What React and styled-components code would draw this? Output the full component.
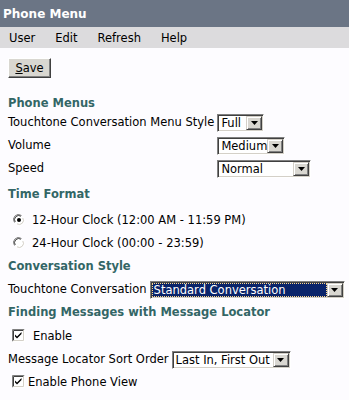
import React from 'react'
import styled, { createGlobalStyle } from 'styled-components'

const GlobalStyle = createGlobalStyle`
  body {
    margin: 0;
    background: #fdfcff;
    font-family: "DejaVu Sans", Verdana, sans-serif;
    font-size: 11.5px;
    color: #000;
  }
`

const TitleBar = styled.div`
  height: 27px;
  background: #6b7585;
  color: #fff;
  font-weight: bold;
  font-size: 12px;
  display: flex;
  align-items: center;
  padding-left: 3px;
`

const MenuBar = styled.div`
  height: 21px;
  background: #dcdbdd;
  display: flex;
  align-items: center;
  gap: 20px;
  padding-left: 9px;
`

const MenuItem = styled.span`
  cursor: default;
`

const Content = styled.div`
  padding: 0 8px;
`

const Toolbar = styled.div`
  padding-top: 10px;
  display: flex;
`

const Button = styled.div`
  width: 43px;
  height: 20px;
  box-sizing: border-box;
  background: #d9d7d1;
  border: 1px solid;
  border-color: #fff #404040 #404040 #fff;
  box-shadow: inset -1px -1px #808080;
  display: flex;
  align-items: center;
  justify-content: center;
  u {
    text-decoration: underline;
  }
`

const SectionTitle = styled.div`
  color: #336666;
  font-weight: bold;
  line-height: 14px;
  padding-top: ${p => p.$top}px;
  padding-bottom: ${p => p.$bottom}px;
`

const FormGrid = styled.div`
  display: grid;
  grid-template-columns: auto auto;
  justify-content: start;
  column-gap: 3px;
  grid-auto-rows: 23px;
  align-items: center;
`

const Row = styled.div`
  height: 23px;
  display: flex;
  align-items: center;
  gap: ${p => p.$gap || 4}px;
  padding-left: ${p => p.$indent || 0}px;
`

const Label = styled.span`
  white-space: nowrap;
`

const SelectFrame = styled.div`
  width: ${p => p.$width}px;
  height: 18px;
  flex-shrink: 0;
  box-sizing: border-box;
  margin-top: 3px;
  display: flex;
  align-items: center;
  background: #fff;
  border: 1px solid;
  border-color: #808080 #fff #fff #808080;
  box-shadow: inset 1px 1px #404040, inset -1px -1px #d4d0c8;
  padding: 1px;
`

const SelectValue = styled.div`
  flex: 1;
  height: 14px;
  line-height: 14px;
  padding-left: 2px;
  white-space: nowrap;
  overflow: hidden;
  box-sizing: border-box;
  background: ${p => (p.$selected ? '#0a246a' : 'transparent')};
  color: ${p => (p.$selected ? '#fff' : '#000')};
  outline: ${p => (p.$selected ? '1px dotted #ffd98a' : 'none')};
  outline-offset: -1px;
`

const ArrowButton = styled.div`
  width: 16px;
  height: 14px;
  box-sizing: border-box;
  background: #d9d7d1;
  border: 1px solid;
  border-color: #d4d0c8 #404040 #404040 #d4d0c8;
  box-shadow: inset 1px 1px #fff, inset -1px -1px #808080;
  display: flex;
  align-items: center;
  justify-content: center;
`

const Select = ({ width, value, selected }) => (
  <SelectFrame $width={width}>
    <SelectValue $selected={selected}>{value}</SelectValue>
    <ArrowButton>
      <svg width="7" height="4" viewBox="0 0 7 4">
        <path d="M0 0h7L3.5 4z" fill="#000" />
      </svg>
    </ArrowButton>
  </SelectFrame>
)

const Radio = ({ checked }) => (
  <svg width="12" height="12" viewBox="0 0 12 12">
    <path d="M1.5 8.5A5 5 0 0 1 8.5 1.5" stroke="#808080" strokeWidth="1" fill="none" />
    <circle cx="6" cy="6" r="4.5" fill="#fff" />
    <path d="M2.2 8A4.2 4.2 0 0 1 8 2.2" stroke="#404040" strokeWidth="1" fill="none" />
    <path d="M10.5 3.5A5 5 0 0 1 3.5 10.5" stroke="#fff" strokeWidth="1" fill="none" />
    <path d="M9.8 4A4.2 4.2 0 0 1 4 9.8" stroke="#d4d0c8" strokeWidth="1" fill="none" />
    {checked && <circle cx="6" cy="6" r="2" fill="#000" />}
  </svg>
)

const Checkbox = () => (
  <svg width="13" height="13" viewBox="0 0 13 13">
    <rect x="0" y="0" width="13" height="13" fill="#fff" />
    <path d="M0.5 12.5V0.5H12.5" stroke="#808080" fill="none" />
    <path d="M1.5 11.5V1.5H11.5" stroke="#404040" fill="none" />
    <path d="M0.5 12.5H12.5V0.5" stroke="#fff" fill="none" />
    <path d="M1.5 11.5H11.5V1.5" stroke="#d4d0c8" fill="none" />
    <path d="M3 5.5l2 2 4.5-4.5v2L5 9.5l-2-2z" fill="#000" />
  </svg>
)

export default function App() {
  return (
    <>
      <GlobalStyle />
      <TitleBar>Phone Menu</TitleBar>
      <MenuBar>
        <MenuItem>User</MenuItem>
        <MenuItem>Edit</MenuItem>
        <MenuItem>Refresh</MenuItem>
        <MenuItem>Help</MenuItem>
      </MenuBar>
      <Content>
        <Toolbar>
          <Button>
            <span><u>S</u>ave</span>
          </Button>
        </Toolbar>

        <SectionTitle $top={18} $bottom={0}>Phone Menus</SectionTitle>
        <FormGrid>
          <Label>Touchtone Conversation Menu Style</Label>
          <Select width={47} value="Full" />
          <Label>Volume</Label>
          <Select width={68} value="Medium" />
          <Label>Speed</Label>
          <Select width={94} value="Normal" />
        </FormGrid>

        <SectionTitle $top={8} $bottom={7}>Time Format</SectionTitle>
        <Row $indent={5} $gap={7}>
          <Radio checked />
          <Label>12-Hour Clock (12:00 AM - 11:59 PM)</Label>
        </Row>
        <Row $indent={5} $gap={7}>
          <Radio />
          <Label>24-Hour Clock (00:00 - 23:59)</Label>
        </Row>

        <SectionTitle $top={5} $bottom={4}>Conversation Style</SectionTitle>
        <Row $gap={3}>
          <Label>Touchtone Conversation</Label>
          <Select width={195} value="Standard Conversation" selected />
        </Row>

        <SectionTitle $top={5} $bottom={5}>Finding Messages with Message Locator</SectionTitle>
        <Row $indent={4} $gap={8}>
          <Checkbox />
          <Label>Enable</Label>
        </Row>
        <Row $gap={3}>
          <Label>Message Locator Sort Order</Label>
          <Select width={119} value="Last In, First Out" />
        </Row>
        <Row $indent={4} $gap={3}>
          <Checkbox />
          <Label>Enable Phone View</Label>
        </Row>
      </Content>
    </>
  )
}
